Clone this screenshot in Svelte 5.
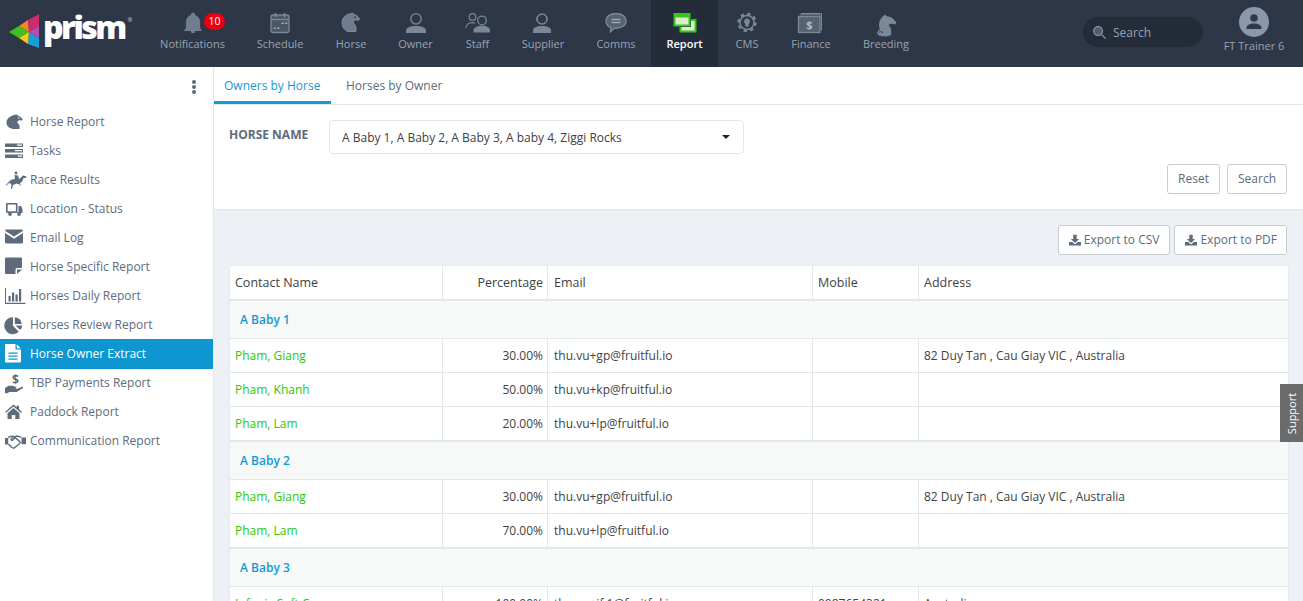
<script>
  const nav = [
    { k: 'bell', t: 'Notifications', w: 93 },
    { k: 'cal', t: 'Schedule', w: 82 },
    { k: 'horse', t: 'Horse', w: 60 },
    { k: 'owner', t: 'Owner', w: 69 },
    { k: 'staff', t: 'Staff', w: 55 },
    { k: 'supplier', t: 'Supplier', w: 76 },
    { k: 'comms', t: 'Comms', w: 70 },
    { k: 'report', t: 'Report', w: 67, active: true },
    { k: 'cms', t: 'CMS', w: 58 },
    { k: 'finance', t: 'Finance', w: 70 },
    { k: 'breeding', t: 'Breeding', w: 80 }
  ];
  const side = [
    ['horse', 'Horse Report'], ['tasks', 'Tasks'], ['race', 'Race Results'], ['truck', 'Location - Status'],
    ['mail', 'Email Log'], ['note', 'Horse Specific Report'], ['chart', 'Horses Daily Report'], ['pie', 'Horses Review Report'],
    ['file', 'Horse Owner Extract'], ['pay', 'TBP Payments Report'], ['home', 'Paddock Report'], ['shake', 'Communication Report']
  ];
  const groups = [
    { name: 'A Baby 1', rows: [
      ['Pham, Giang', '30.00%', 'thu.vu+gp@fruitful.io', '', '82 Duy Tan , Cau Giay VIC , Australia'],
      ['Pham, Khanh', '50.00%', 'thu.vu+kp@fruitful.io', '', ''],
      ['Pham, Lam', '20.00%', 'thu.vu+lp@fruitful.io', '', '']
    ]},
    { name: 'A Baby 2', rows: [
      ['Pham, Giang', '30.00%', 'thu.vu+gp@fruitful.io', '', '82 Duy Tan , Cau Giay VIC , Australia'],
      ['Pham, Lam', '70.00%', 'thu.vu+lp@fruitful.io', '', '']
    ]},
    { name: 'A Baby 3', rows: [
      ['Infonix Soft Co', '100.00%', 'thu.vu+if.1@fruitful.io', '0987654321', 'Australia']
    ]}
  ];
</script>

{#snippet navIcon(k)}
  <svg class="nicon" viewBox="0 0 36 26" width="36" height="26" aria-hidden="true">
    {#if k === 'bell'}
      <path fill="#6f7d8e" stroke="#8b97a5" stroke-width="0.6" d="M18 3a1.6 1.6 0 0 1 1.6 1.6v.7c3.4.9 5 3.5 5 7V18l1.9 2.5h-17L11.4 18v-5.700c0-3.500 1.600-6.100 5-7v-.7A1.600 1.600 0 0 1 18 3z"/><path fill="#8b97a5" d="M15.800 21.300h4.400a2.200 1.800 0 0 1-4.400 0z"/>
    {:else if k === 'cal'}
      <rect x="9" y="5" width="18" height="17.5" rx="2" fill="#4a5767" stroke="#7b8898" stroke-width="1.3"/><path d="M9 9.500h18" stroke="#7b8898" stroke-width="1.3"/><path d="M13.500 3v4M22.500 3v4" stroke="#7b8898" stroke-width="1.6"/><path d="M19.500 12.500h2.400V14h-2.400zM23 12.500h2.400V14H23zM11.500 17.500h2.400V19h-2.400zM15 17.500h2.400V19H15z" fill="#9aa5b2"/>
    {:else if k === 'horse'}
      <path fill="#6f7d8e" stroke="#8b97a5" stroke-width="0.8" d="M20 3.200l1.500 1.500c2.300.6 3.800 2 5 3.900l-.9 1.700-3.100-.4-2 1.200c-.5 1.300.5 2.600 1.500 3.800 1 1.400 1.300 3.600.9 6.600H15c-4-1.400-6-5-6-9 0-4.800 4.500-8.800 11-9.300z"/><circle cx="22.300" cy="7.300" r="0.9" fill="#2e3748"/>
    {:else if k === 'owner'}
      <circle cx="18" cy="8.800" r="5.200" fill="none" stroke="#7b8898" stroke-width="1.4"/><path fill="#7b8898" d="M8 23v-2.200c0-3 3.800-4.800 10-4.800s10 1.800 10 4.800V23z"/>
    {:else if k === 'staff'}
      <circle cx="12.500" cy="7" r="3.300" fill="none" stroke="#7b8898" stroke-width="1.2"/><path fill="none" stroke="#7b8898" stroke-width="1.2" d="M6 18c0-3.400 3-5.400 6.300-5.400 1 0 1.900.2 2.700.5"/><circle cx="22" cy="10.500" r="4.300" fill="none" stroke="#7b8898" stroke-width="1.3"/><path fill="#7b8898" d="M13.500 22.500v-1.900c0-3 3.800-4.800 8.500-4.800s8 1.800 8 4.800v1.900z"/>
    {:else if k === 'supplier'}
      <circle cx="17" cy="9" r="5" fill="none" stroke="#7b8898" stroke-width="1.4"/><path d="M11.500 7.500h1.400v3.500h-1.400zM21.100 7.500h1.400v3.500h-1.400z" fill="#7b8898"/><path fill="#7b8898" d="M8 23v-2.500c0-3 3.500-4.500 9-4.500s9 1.500 9 4.500V23z"/>
    {:else if k === 'comms'}
      <path fill="#566372" stroke="#7b8898" stroke-width="1.4" d="M18 3.500c5.600 0 10 2.900 10 7.400s-4.400 7.400-10 7.400h-2l-3.500 3.500.3-4.300c-3-1.200-4.800-3.600-4.800-6.600 0-4.500 4.400-7.400 10-7.400z"/><path d="M13.500 9.500h9M13.500 12.500h9" stroke="#9aa5b2" stroke-width="1.3"/>
    {:else if k === 'report'}
      <rect x="13.500" y="10" width="15" height="11.500" fill="#dcecce" stroke="#38c41d" stroke-width="2"/><rect x="6" y="2.500" width="18" height="14.500" fill="#242c39"/><rect x="7.500" y="4" width="15" height="11.500" fill="#dcecce" stroke="#38c41d" stroke-width="2"/><path d="M7 5h16v2.500H7z" fill="#38c41d"/>
    {:else if k === 'cms'}
      <circle cx="18" cy="12.500" r="8.500" fill="none" stroke="#7b8898" stroke-width="2.400" stroke-dasharray="3.300 3.370"/><circle cx="18" cy="12.500" r="7" fill="#2e3748" stroke="#7b8898" stroke-width="1.5"/><path fill="#7b8898" d="M18 8.500a3 3 0 0 1 1.800 5.400v2.600h-3.600v-2.600A3 3 0 0 1 18 8.500z"/>
    {:else if k === 'finance'}
      <path d="M8 3.500h20.500v17" fill="none" stroke="#7b8898" stroke-width="1"/><path d="M6.500 4.800h20.500v1" fill="none" stroke="#7b8898" stroke-width="1"/><rect x="5.500" y="6.500" width="21.500" height="16" fill="#566372" stroke="#7b8898" stroke-width="1.3"/><text x="16.300" y="18.500" font-family="Open Sans" font-weight="700" font-size="11" fill="#b4bdc7" text-anchor="middle">$</text>
    {:else if k === 'breeding'}
      <path fill="#7b8898" d="M17 4.500l1.800 1.700c4 .3 7 2.300 9.700 6.300l-1.300 2-3.700-.7-3 1 2.400 3.500.5 6.700-5 1.500-4-.3-3.500-.7-2-2.500 1.800-3.200 1.500-.4c-1.200-2-1.500-4-1-6.500.5-3.400 3-6 5.800-8.400z"/><path d="M10.500 22.500c1-1 3-1 4.500 0" stroke="#2e3748" stroke-width="1" fill="none"/>
    {/if}
  </svg>
{/snippet}

{#snippet sideIcon(k)}
  <svg class="sicon" viewBox="0 0 20 20" width="20" height="20" aria-hidden="true" fill="currentColor">
    {#if k === 'horse'}
      <path d="M12 2.500l1.500 1.500c2 .5 3 1.700 4.200 3.200l-.7 1.300-2.600-.3-1.900 1c-.5 1.200.5 2.300 1.400 3.300.8 1 1 3 .6 4.500H9.500C5 17 1.500 14.500 1.500 10.500c0-4 4-7.500 10.500-8z"/><circle cx="13.800" cy="6" r="0.7" fill="#fff"/>
    {:else if k === 'tasks'}
      <path d="M0 2.500h18v3.500H0zM0 8h18v3.500H0zM0 13.500h18V17H0z"/><path d="M12 3.500h5v1.200h-5zM10 9h7v1.200h-7zM13 14.500h4v1.200h-4z" fill="#fff"/>
    {:else if k === 'race'}
      <path d="M1 15C3 13 4 11 6 10C9 8.500 12 9 15 8.500L18 5.500L21.500 6.500L21 8L18.500 8C18 11 16.500 12.500 15 13L16 16.500L14.500 14.500L11.500 13.500L8 15L7 19L6 19L6.500 14L4 13L1 16z"/><circle cx="11" cy="3" r="1.4"/><path d="M9.500 5L13 5.500L14 8.500L10 9.500z"/>
    {:else if k === 'truck'}
      <path d="M2 4h9.500a1 1 0 0 1 1 1v9H2.500a1.500 1.500 0 0 1-1.500-1.500V5a1 1 0 0 1 1-1zM13.500 7h2.500l1.500 3v4h-4z"/><path d="M2.600 5.500h8.300v6.800H2.600z" fill="#fff"/><circle cx="5" cy="15" r="1.900"/><circle cx="14" cy="15" r="1.900"/>
    {:else if k === 'mail'}
      <path d="M1.500 1.500h15c.8 0 1.400.5 1.500 1.200L9 8.500 0 2.700c.1-.7.700-1.200 1.500-1.200zM0 5l9 5.800L18 5v9a1.500 1.500 0 0 1-1.500 1.500h-15A1.500 1.500 0 0 1 0 14z"/>
    {:else if k === 'note'}
      <path d="M1 0.500h15a1 1 0 0 1 1 1V11h-5a1.500 1.500 0 0 0-1.500 1.500v4.500H1a1 1 0 0 1-1-1V1.500a1 1 0 0 1 1-1zM12 12.500h5l-5 4.500z"/>
    {:else if k === 'chart'}
      <path d="M0 2h1v14.800h19.500V18H0zM3.500 10h2.200v5.500H3.500zM7 6.500h2.200v9H7zM10.500 8.500h2.200v7h-2.200zM14 3h2.200v12.500H14z"/>
    {:else if k === 'pie'}
      <path d="M8 2.200v8.500l5.800 6A8.500 8.500 0 1 1 8 2.200zM9.800 2.200a8 8 0 0 1 7 6.800h-7zM10.500 10.500h6.700a8 8 0 0 1-2 4.600z"/>
    {:else if k === 'file'}
      <path d="M1 1h9.500v5.500H16v12a1 1 0 0 1-1 1H1a1 1 0 0 1-1-1V2a1 1 0 0 1 1-1zM11.800 1.300v3.900h3.900z"/><path d="M3.500 9.500h9v1.300h-9zM3.500 12.500h9v1.300h-9zM3.500 15.500h9v1.300h-9z" fill="#0d96cf"/>
    {:else if k === 'pay'}
      <path d="M0 15l3.500-2.200h4l3.500 1.200c1 .5.500 1.800-.5 1.700l-3-.3 4.500.5 5-2.200c1-.2 1.500 1 .7 1.600l-6 3.700H4.500L2 20.300H0z"/><text x="10.500" y="10.500" font-family="Open Sans" font-weight="700" font-size="12" text-anchor="middle">$</text>
    {:else if k === 'home'}
      <path d="M8.500 2.500l3.200 2.800V3.800h2.300v3.500l3 2.800-1 .9-7.500-6.500L1 10.800l-1-.9z"/><path d="M8.500 6l6 5.200V17h-4.200v-4H6.700v4H2.500v-5.800z"/>
    {:else if k === 'shake'}
      <path fill="none" stroke="currentColor" stroke-width="1.4" d="M3.200 6.500l3.300-1.300 3 .6 2.500-.8 4.300 1.200M3.200 13l3.800 3.500c1 .8 2 .8 2.800 0l4.700-3.700c.8-.9 1-1.600 0-2.400L10 6.500 7.700 9c-.8.8-2 .2-1.500-.9l2-2.500"/><path d="M0 7h3.200v6.500H0zM16.500 6.500H21v6.800h-4.500z"/>
    {/if}
  </svg>
{/snippet}

{#snippet dl()}
  <svg class="dl" viewBox="0 0 12 12" width="12" height="12" aria-hidden="true"><path fill="currentColor" d="M4.300.7h3.400v4.200h2.500L6 9 1.800 4.900h2.500z"/><path fill="currentColor" d="M0 8h3.300L5 9.800c.5.500 1.500.5 2 0L8.700 8H12v3.500H0z"/></svg>
{/snippet}

<div class="page">
  <header class="top">
    <div class="logo">
      <svg viewBox="9 14 30 34" width="30" height="34" aria-hidden="true">
        <path d="M9 32l10-6 10 6-10 6z" fill="#3fc01d"/>
        <path d="M19 26l9-6 1 12z" fill="#f08a24"/>
        <path d="M28 20l11-6v12l-10 6z" fill="#cf2a6a"/>
        <path d="M39 26v12l-10-6z" fill="#b84bb8"/>
        <path d="M29 32l10 6v10l-11-4z" fill="#1a9cd8"/>
        <path d="M19 38l10-6-1 12z" fill="#f5cb16"/>
      </svg>
      <span class="wordmark">prism</span><span class="reg">®</span>
    </div>
    <nav class="nav">
      {#each nav as n}
        <div class="nitem" class:active={n.active} style="width:{n.w}px">
          {@render navIcon(n.k)}
          <span>{n.t}</span>
          {#if n.k === 'bell'}<b class="badge">10</b>{/if}
        </div>
      {/each}
    </nav>
    <div class="topright">
      <div class="search">
        <svg viewBox="0 0 16 16" width="15" height="15" aria-hidden="true"><circle cx="6.500" cy="6.500" r="4.700" fill="#4f5e6f" stroke="#8794a3" stroke-width="1.3"/><path d="M10 10l4.500 4.500" stroke="#8794a3" stroke-width="1.4"/></svg>
        <span>Search</span>
      </div>
      <div class="user">
        <div class="avatar">
          <svg viewBox="0 0 30 30" width="30" height="30" aria-hidden="true"><circle cx="15" cy="11" r="3.800" fill="#2f3a4b"/><path fill="#2f3a4b" d="M7.500 22v-1c0-3 3.300-4.500 7.500-4.500s7.500 1.500 7.500 4.500v1z"/></svg>
        </div>
        <span>FT Trainer 6</span>
      </div>
    </div>
  </header>

  <div class="body">
    <aside class="side">
      <div class="dots"><i></i><i></i><i></i></div>
      <ul>
        {#each side as s}
          <li class:on={s[0] === 'file'}>
            <span class="ic">{@render sideIcon(s[0])}</span>
            <span>{s[1]}</span>
          </li>
        {/each}
      </ul>
    </aside>

    <main class="main">
      <div class="whitearea">
        <div class="tabs">
          <div class="tab current">Owners by Horse</div>
          <div class="tab">Horses by Owner</div>
        </div>
        <div class="filter">
          <div class="frow">
            <span class="lbl">HORSE NAME</span>
            <div class="select">
              <span>A Baby 1, A Baby 2, A Baby 3, A baby 4, Ziggi Rocks</span>
              <i class="caret"></i>
            </div>
          </div>
          <div class="actions">
            <button class="reset">Reset</button>
            <button>Search</button>
          </div>
        </div>
      </div>
      <div class="content">
        <div class="exports">
          <button>{@render dl()}Export to CSV</button>
          <button class="pdf">{@render dl()}Export to PDF</button>
        </div>
        <div class="table">
          <div class="row head">
            <div class="c c1">Contact Name</div>
            <div class="c c2">Percentage</div>
            <div class="c c3">Email</div>
            <div class="c c4">Mobile</div>
            <div class="c c5">Address</div>
          </div>
          {#each groups as g, gi}
            <div class="group" class:firstg={gi === 0}>{g.name}</div>
            {#each g.rows as r}
              <div class="row">
                <div class="c c1 name">{r[0]}</div>
                <div class="c c2">{r[1]}</div>
                <div class="c c3">{r[2]}</div>
                <div class="c c4">{r[3]}</div>
                <div class="c c5">{r[4]}</div>
              </div>
            {/each}
          {/each}
        </div>
      </div>
      <div class="support"><span>Support</span></div>
    </main>
  </div>
</div>

<style>
  :global(body) { margin: 0; overflow: hidden; background: #fff; }
  .page { width: 1303px; height: 601px; overflow: hidden; font-family: "Open Sans", "Liberation Sans", sans-serif; font-size: 12px; color: #3f3f3f; }
  .top { height: 67px; background: #2e3748; display: flex; align-items: stretch; }
  .logo { width: 146px; flex: none; display: flex; align-items: flex-start; padding: 14px 0 0 9px; box-sizing: border-box; }
  .wordmark { font-family: "Open Sans", sans-serif; font-weight: 800; font-size: 32px; line-height: 30px; color: #fff; letter-spacing: -2.6px; margin: -2px 0 0 4px; }
  .reg { font-size: 6px; color: #cfd4da; line-height: 10px; margin: 1px 0 0 3px; }
  .nav { display: flex; }
  .nitem { position: relative; display: flex; flex-direction: column; align-items: center; color: #98a3b0; font-size: 11px; line-height: 16px; padding-top: 10px; box-sizing: border-box; white-space: nowrap; }
  .nitem.active { background: #242c39; color: #fff; font-weight: 600; }
  .nicon { display: block; overflow: visible; flex: none; }
  .badge { position: absolute; left: 58px; top: 13px; width: 21px; height: 17px; border-radius: 9px; background: #e8000e; color: #fff; font-size: 10.5px; font-weight: 400; line-height: 17px; text-align: center; }
  .topright { margin-left: auto; display: flex; }
  .search { width: 120px; height: 30px; border-radius: 15px; background: #232c38; margin-top: 17px; display: flex; align-items: center; gap: 6px; padding-left: 9px; box-sizing: border-box; color: #98a3b0; font-size: 12px; }
  .user { width: 100px; display: flex; flex-direction: column; align-items: center; color: #98a3b0; font-size: 11px; line-height: 14px; padding: 7px 0 0 2px; box-sizing: border-box; }
  .avatar { width: 30px; height: 30px; border-radius: 50%; background: #8b98ab; margin-bottom: 2px; }
  .body { display: flex; height: 534px; }
  .side { width: 214px; flex: none; border-right: 1px solid #e2e7ec; box-sizing: border-box; background: #fff; color: #5d6b7b; }
  .dots { height: 40px; position: relative; }
  .dots i { position: absolute; left: 192px; width: 4px; height: 4px; border-radius: 50%; background: #5d6b7b; }
  .dots i:nth-child(1) { top: 13px; }
  .dots i:nth-child(2) { top: 18px; }
  .dots i:nth-child(3) { top: 23px; }
  ul { list-style: none; margin: 0; padding: 0; }
  li { height: 29px; display: flex; align-items: center; gap: 5px; padding-left: 5px; box-sizing: border-box; color: #5d6b7b; }
  li.on { background: #0d96cf; color: #fff; height: 30px; font-weight: 500; margin-bottom: -1px; padding-bottom: 2px; }
  .ic { display: flex; width: 20px; }
  .sicon { overflow: visible; }
  .main { flex: 1; position: relative; min-width: 0; background: #edf0f4; }
  .whitearea { background: #fff; height: 142px; border-bottom: 1px solid #e2e7ec; box-sizing: content-box; }
  .tabs { display: flex; height: 38px; border-bottom: 1px solid #e2e7ec; box-sizing: border-box; }
  .tab { padding-left: 10px; line-height: 37px; color: #5d6b7b; box-sizing: border-box; height: 37px; width: 117px; white-space: nowrap; }
  .tab + .tab { padding-left: 15px; width: 130px; }
  .tab.current { color: #129ad4; border-bottom: 3px solid #129ad4; }
  .filter { padding: 15px 16px 0 15px; }
  .frow { display: flex; align-items: flex-start; }
  .lbl { width: 100px; font-weight: 700; color: #5d6b7b; line-height: 29px; }
  .select { width: 388px; height: 32px; border: 1px solid #e2e7ec; border-radius: 4px; display: flex; align-items: center; justify-content: space-between; padding: 0 13px 0 12px; box-sizing: content-box; }
  .caret { border: 4px solid transparent; border-top-color: #222; border-bottom: 0; }
  .actions { display: flex; justify-content: flex-end; gap: 7px; margin-top: 10px; }
  button { font: inherit; background: #fff; border: 1px solid #c7ccd1; border-radius: 3px; color: #5d6b7b; height: 30px; padding: 0 10px 2px; box-sizing: border-box; display: flex; align-items: center; }
  button.reset { width: 53px; padding: 0 0 2px; justify-content: center; }
  .content { padding: 15px 14px 0 15px; }
  .exports { display: flex; justify-content: flex-end; gap: 4px; padding-right: 2px; }
  .exports button { gap: 3px; }
  .exports button.pdf { padding-right: 9px; }
  .dl { flex: none; margin-top: 2px; }
  .table { margin-top: 10px; background: #fff; border-radius: 3px 3px 0 0; width: 1060px; outline: 1px solid #e6eaee; outline-offset: -1px; }
  .row { display: flex; height: 34px; border-bottom: 1px solid #e2e7ec; box-sizing: border-box; }
  .row.head { height: 36px; border-bottom: 2px solid #e2e7ec; }
  .c { padding: 0 4px 0 6px; line-height: 33px; box-sizing: border-box; border-right: 1px solid #e2e7ec; white-space: nowrap; overflow: hidden; }
  .head .c { line-height: 35px; font-size: 12.5px; }
  .c1 { width: 214px; }
  .c2 { width: 105px; text-align: right; }
  .c3 { width: 265px; }
  .c4 { width: 106px; padding-left: 5px; }
  .c5 { flex: 1; border-right: 0; padding-left: 5px; }
  .name { color: #28c80c; }
  .group { height: 39px; background: #f7f8f8; color: #129ad4; font-weight: 600; padding-left: 11px; line-height: 37px; border-bottom: 1px solid #e2e7ec; border-top: 1px solid #e2e7ec; box-sizing: border-box; }
  .group.firstg { border-top: 0; height: 38px; }
  .support { position: absolute; right: 0; top: 317px; width: 23px; height: 58px; background: #6b6b6b; color: #fff; font-size: 11px; display: flex; align-items: center; justify-content: center; }
  .support span { transform: rotate(-90deg); white-space: nowrap; }
</style>
